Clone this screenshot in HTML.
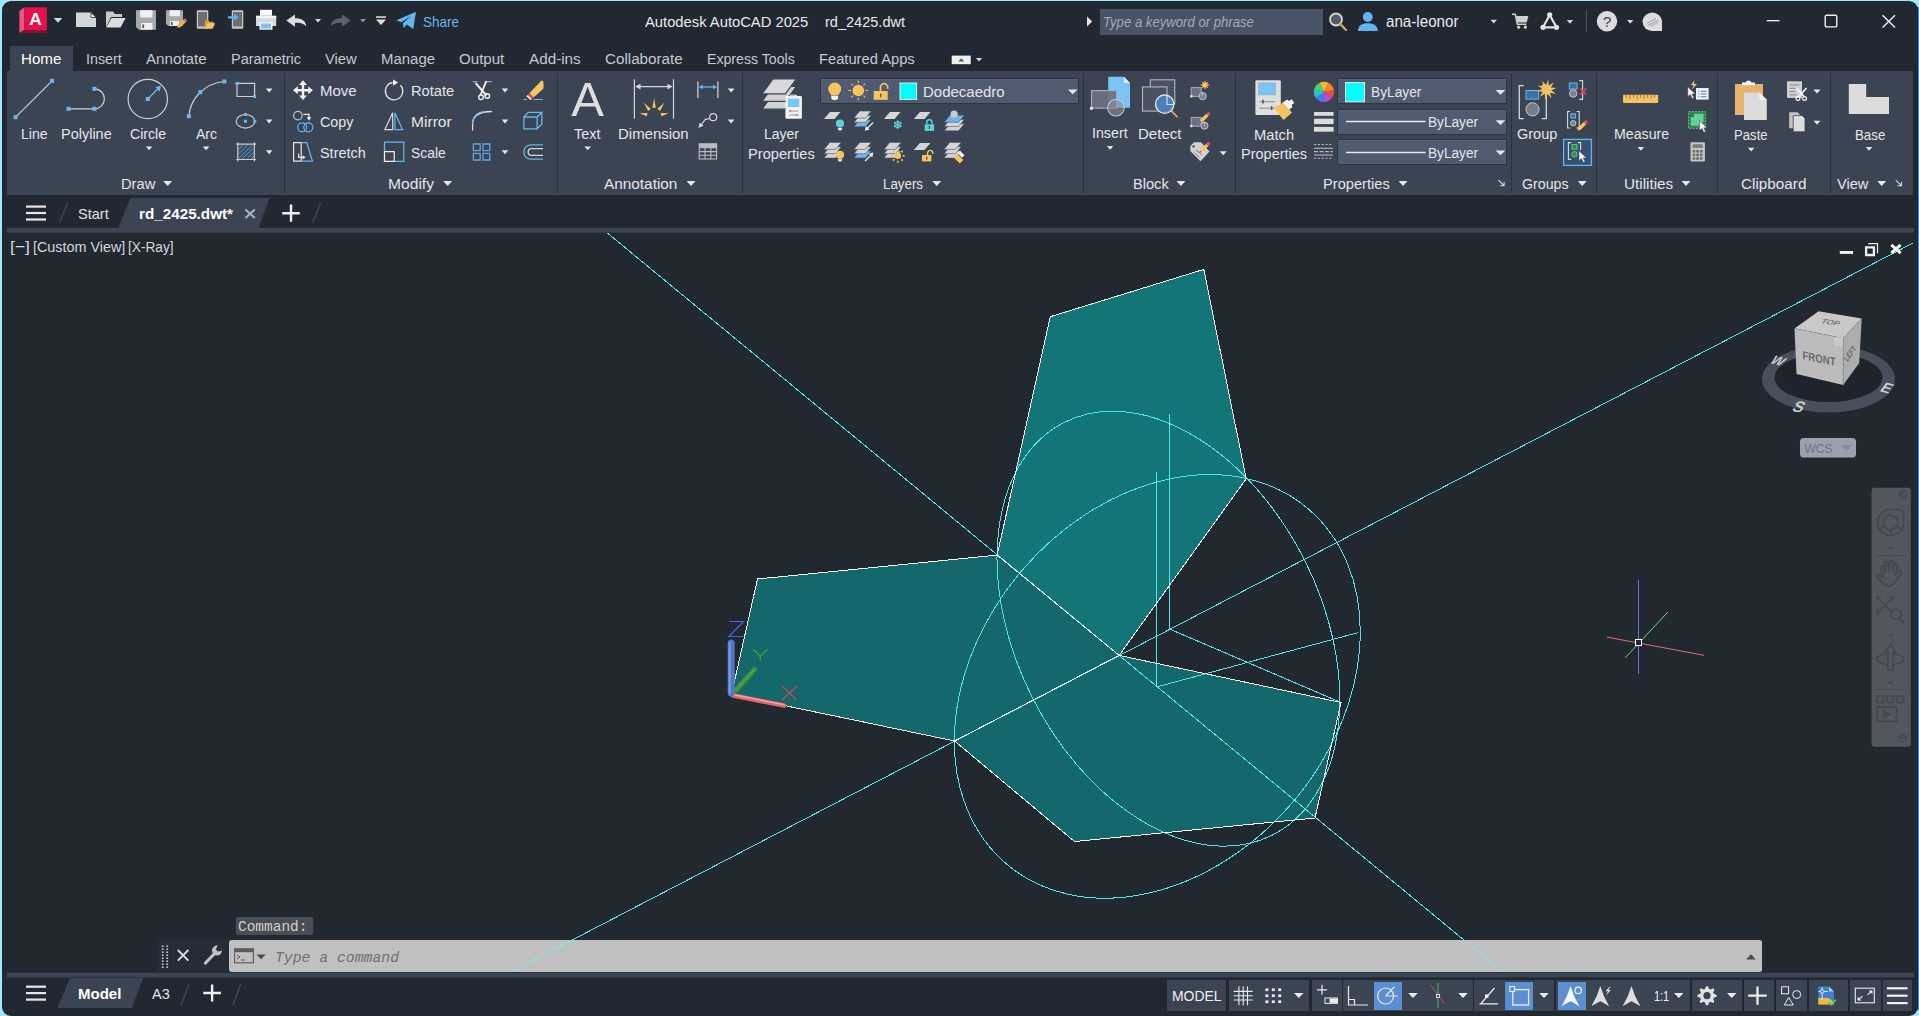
<!DOCTYPE html><html><head><meta charset="utf-8"><title>Autodesk AutoCAD 2025 - rd_2425.dwt</title><style>
*{margin:0;padding:0;box-sizing:border-box}
html,body{width:1919px;height:1016px;overflow:hidden;background:#9ae8fb}
body{font-family:"Liberation Sans",sans-serif;position:relative}
#win{position:absolute;left:0;top:0;width:1919px;height:1016px;overflow:hidden;background:#9eeafc}
#app{position:absolute;left:2px;top:2px;width:1916px;height:1014px;background:#222831;border-radius:9px 9px 9px 9px;overflow:hidden}
.abs{position:absolute}
.t{position:absolute;white-space:nowrap;line-height:20px;height:20px;transform-origin:0 50%;display:block}
.mono{font-family:"Liberation Mono",monospace}
svg{position:absolute;overflow:visible}
#app{left:1.8px;top:1.4px;width:1916.2px;height:1014.6px}
#rb{position:absolute;left:1916px;top:7px;width:3px;height:1003px;background:#2a8fd6}
.pn{position:absolute;background:#3b4453}
.sep{position:absolute;width:1px;background:#2b323e;top:73px;height:120px}
.dd{position:absolute;background:#4f5b6f;border:1px solid #2d3542;box-shadow:inset 0 1px 0 #56637a}
.arr{position:absolute;width:0;height:0;border-left:4.5px solid transparent;border-right:4.5px solid transparent;border-top:5px solid #e4e6ea}
.arrs{position:absolute;width:0;height:0;border-left:3.5px solid transparent;border-right:3.5px solid transparent;border-top:4px solid #e4e6ea}
.sb{position:absolute;top:980px;height:31px;background:#3b4453}
.sbh{position:absolute;top:982px;height:28px;background:#5b8fd2}
</style></head><body><div id="win">
<div id="rb"></div>
<div id="app"></div>
<!-- coordinates below are in page space -->
<!-- ribbon active tab -->
<div class="pn" style="left:10px;top:46px;width:63.2px;height:27px"></div>
<!-- ribbon panel -->
<div class="pn" style="left:7px;top:71px;width:1906px;height:124px"></div>
<div class="sep" style="left:284px"></div>
<div class="sep" style="left:557px"></div>
<div class="sep" style="left:742px"></div>
<div class="sep" style="left:1083px"></div>
<div class="sep" style="left:1235px"></div>
<div class="sep" style="left:1511px"></div>
<div class="sep" style="left:1596px"></div>
<div class="sep" style="left:1717px"></div>
<div class="sep" style="left:1830px"></div>
<!-- search box -->
<div class="abs" style="left:1100px;top:9px;width:223px;height:26px;background:#495367"></div>
<!-- layer dropdown -->
<div class="dd" style="left:820.3px;top:77.6px;width:259.2px;height:26.8px"></div>
<div class="dd" style="left:1337.2px;top:78.4px;width:170.2px;height:26px"></div>
<div class="dd" style="left:1337.2px;top:108.7px;width:170.2px;height:26.7px"></div>
<div class="dd" style="left:1337.2px;top:138.9px;width:170.2px;height:26.4px"></div>
<!-- file tab strip -->
<svg style="left:0;top:0" width="1919" height="1016" viewBox="0 0 1919 1016">
 <path d="M118.3,228L129.6,200A3,3 0 0 1 132.4,198H269.7L258.5,228Z" fill="#3b4453"/>
 <rect x="7" y="227.8" width="1907" height="5" fill="#3c4554"/>
 <rect x="2" y="232.8" width="1916" height="740" fill="#212830"/>
 <rect x="7" y="972.6" width="1907" height="4.8" fill="#3c4554"/>
 <polygon points="57.3,1008 70,978 143.3,978 131.7,1008" fill="#3b4453"/>
</svg>
<!-- status bar boxes -->
<div class="sb" style="left:1167px;width:59px"></div>
<div class="sb" style="left:1229px;width:80px"></div>
<div class="sb" style="left:1312px;width:30px"></div>
<div class="sb" style="left:1343px;width:130px"></div>
<div class="sb" style="left:1474px;width:80px"></div>
<div class="sb" style="left:1556px;width:134px"></div>
<div class="sb" style="left:1692px;width:50px"></div>
<div class="sb" style="left:1744px;width:30px"></div>
<div class="sb" style="left:1776px;width:31px"></div>
<div class="sb" style="left:1809px;width:39px"></div>
<div class="sb" style="left:1850px;width:31px"></div>
<div class="sb" style="left:1883px;width:29px"></div>
<div class="sbh" style="left:1374px;width:28px"></div>
<div class="sbh" style="left:1505px;width:28px"></div>
<div class="sbh" style="left:1558px;width:28px"></div>

<svg id="dwg" style="left:0;top:0" width="1919" height="1016" viewBox="0 0 1919 1016">
<defs><clipPath id="dc"><rect x="3" y="233" width="1911" height="739"/></clipPath></defs>
<g clip-path="url(#dc)" shape-rendering="crispEdges" fill="none" stroke-width="1">
<polygon points="757.5,579 997.2,555.1 1119.1,655.4 954.6,741 731.5,694.5" fill="#14686c" stroke="none"/>
<polygon points="1119.1,655.4 1341,702.5 1315,818 1074.5,841.5 954.6,741" fill="#14676b" stroke="none"/>
<polygon points="1050.3,316.7 1203.8,269.4 1246.2,478.8 1119.1,655.4 997.2,555.1" fill="#147578" stroke="none"/>
<g stroke="#4fe6ea">
<ellipse cx="1168.4" cy="628.7" rx="231.1" ry="152.5" transform="rotate(-116.78 1168.4 628.7)"/>
<ellipse cx="1157.3" cy="686.4" rx="233.0" ry="178.2" transform="rotate(-49.7 1157.3 686.4)"/>
<line x1="607.4" y1="233" x2="1502.7" y2="972"/>
<line x1="510.6" y1="972" x2="1913.4" y2="242.8"/>
<line x1="1156.5" y1="472" x2="1156.5" y2="687"/>
<line x1="1169.5" y1="414" x2="1169.5" y2="629"/>
<line x1="1169.5" y1="629" x2="1341" y2="702.5"/>
<line x1="1156.5" y1="687" x2="1358.5" y2="632.5"/>
</g>
<g stroke="#f4fbfb">
<polygon points="757.5,579 997.2,555.1 1119.1,655.4 954.6,741 731.5,694.5"/>
<polygon points="1119.1,655.4 1341,702.5 1315,818 1074.5,841.5 954.6,741"/>
<polygon points="1050.3,316.7 1203.8,269.4 1246.2,478.8 1119.1,655.4 997.2,555.1"/>
</g>
</g>
</svg>
<svg style="left:0;top:0" width="1919" height="1016" viewBox="0 0 1919 1016">
<!-- overlay -->
<g stroke-linecap="round">
<line x1="735.5" y1="690.5" x2="754.5" y2="669.5" stroke="#3f8f3a" stroke-width="5.2"/>
<line x1="736.3" y1="689.6" x2="754.3" y2="669.7" stroke="#5aa84a" stroke-width="2" opacity=".7"/>
<line x1="733" y1="695.5" x2="784" y2="705.6" stroke="#e06468" stroke-width="4.6"/>
<line x1="733" y1="694.6" x2="784" y2="704.7" stroke="#f4a0a0" stroke-width="1.6"/>
<line x1="731.2" y1="693" x2="731.2" y2="643" stroke="#4f78c4" stroke-width="7"/>
<line x1="729.6" y1="693" x2="729.6" y2="643" stroke="#7a9ee0" stroke-width="2"/>
</g>
<path d="M729,621.5H743.5L729,636.5H743.5" fill="none" stroke="#3a6ce0" stroke-width="1.2"/>
<path d="M753,649L760.3,656.5L767.5,649M760.3,656.5V661" fill="none" stroke="#3fa63a" stroke-width="1.2"/>
<path d="M782,686L797,700M797,686L782,700" fill="none" stroke="#c84a50" stroke-width="1.2"/>
<g shape-rendering="crispEdges"><line x1="1638.5" y1="580" x2="1638.5" y2="674" stroke="#6a72e0" stroke-width="1"/></g>
<line x1="1606.9" y1="637.1" x2="1704" y2="655.3" stroke="#d67478" stroke-width="1"/>
<line x1="1625.2" y1="657.8" x2="1667.9" y2="612" stroke="#6fd67a" stroke-width="1"/>
<rect x="1635.5" y="639.5" width="6" height="6" fill="#222933" stroke="#ffffff" stroke-width="1" shape-rendering="crispEdges"/>
<ellipse cx="1828.5" cy="379" rx="66.5" ry="33.5" fill="#484f5c"/>
<ellipse cx="1828.5" cy="377.5" rx="54" ry="24.5" fill="#1e232c"/>
<polygon points="1794.5,328.4 1818.6,311.2 1861.7,318.6 1843.2,338.3" fill="#c9c9c9"/>
<polygon points="1794.5,328.4 1843.2,338.3 1843.2,385 1796.5,374" fill="#bcbcbc"/>
<polygon points="1843.2,338.3 1861.7,318.6 1859.2,362.9 1843.2,385" fill="#adadad"/>
<path d="M1794.5,328.4L1843.2,338.3L1861.7,318.6M1843.2,338.3V385" fill="none" stroke="#8a8a8a" stroke-width=".8" stroke-dasharray="3 2"/>
<rect x="1834" y="337" width="9" height="9" fill="#d4d4d4" opacity=".6"/>
<text transform="translate(1802.5,359) skewY(12)" font-family="Liberation Sans, sans-serif" font-weight="700" font-size="11.5" fill="#6a6a6a" textLength="33" lengthAdjust="spacingAndGlyphs">FRONT</text>
<text transform="translate(1820,323) rotate(9) skewX(-30)" font-family="Liberation Sans, sans-serif" font-weight="700" font-size="7" fill="#7a7a7a" textLength="18" lengthAdjust="spacingAndGlyphs">TOP</text>
<text transform="translate(1847.5,362) rotate(-55) skewX(-10)" font-family="Liberation Sans, sans-serif" font-weight="700" font-size="8" fill="#6a6a6a" textLength="16" lengthAdjust="spacingAndGlyphs">LEFT</text>
<text transform="translate(1769,363) rotate(14) skewX(-28)" font-family="Liberation Sans, sans-serif" font-weight="700" font-size="13" fill="#c4c4c4">W</text>
<text transform="translate(1791,411) rotate(9) skewX(-20)" font-family="Liberation Sans, sans-serif" font-weight="700" font-size="16" fill="#cccccc">S</text>
<text transform="translate(1879,391) rotate(16) skewX(-20)" font-family="Liberation Sans, sans-serif" font-weight="700" font-size="15" fill="#cccccc">E</text>
<rect x="1800" y="438" width="56" height="19.5" rx="3.5" fill="#9b9fae"/>
<text x="1804.5" y="452.5" font-family="Liberation Sans, sans-serif" font-size="12.5" fill="#6f7382" textLength="28" lengthAdjust="spacingAndGlyphs">WCS</text>
<polygon points="1841,445 1852,445 1846.5,450.5" fill="#858999"/>
<rect x="1871.5" y="487.7" width="39.3" height="259" rx="3" fill="#51565f"/>
<g fill="none" stroke="#44484f" stroke-width="1.6">
<path d="M1890.5,509.5H1900A3.5,3.5 0 0 1 1903.5,513V522.5A13,13 0 1 1 1890.5,509.5Z"/><circle cx="1890.5" cy="522.5" r="7.2"/><path d="M1890.5,529.7V535.5M1884.3,526L1879.5,529M1896.7,526L1901.5,529"/>
<path d="M1883.5,577L1880.5,568.5C1879.8,566.3 1882.6,565.3 1883.5,567.4L1885.5,572.5L1884.6,563.2C1884.4,561 1887.4,560.6 1887.8,562.8L1889,571L1889.6,561.5C1889.8,559.3 1892.8,559.4 1892.8,561.6L1892.6,571.5L1894.8,563.8C1895.4,561.7 1898.3,562.5 1897.8,564.7L1895.8,574L1898.5,571.5C1900,570 1902.3,571.8 1901,573.6L1895.5,581.5C1893.5,584.5 1891.5,586 1888.5,586C1885,586 1883,584 1880.5,581L1876.8,576.5C1875.5,574.8 1877.6,573.2 1879.2,574.6Z"/>
<path d="M1877,597L1893,613M1893,597L1877,613M1877,601V597H1881M1889,597H1893V601M1877,609V613H1881"/><circle cx="1896" cy="614.5" r="5"/><path d="M1899.5,618.5L1904,623" stroke-width="2.4"/>
<ellipse cx="1890.5" cy="659" rx="13.5" ry="5.5"/><path d="M1888,670V652H1885L1890.5,644.5L1896,652H1893V670Z" fill="#51565f"/>
<rect x="1877" y="696" width="6.5" height="6.5"/><rect x="1887" y="696" width="6.5" height="6.5"/><rect x="1897" y="696" width="6.5" height="6.5"/><rect x="1877" y="707" width="19.5" height="14.5"/>
</g>
<path d="M1882.5,713.5L1891.5,718L1882.5,722.5Z" fill="#44484f" transform="translate(0,-3.7)"/>
<polygon points="1887.5,547 1893.5,547 1890.5,550.5" fill="#44484f"/>
<polygon points="1887.5,634.5 1893.5,634.5 1890.5,638.0" fill="#44484f"/>
<polygon points="1887.5,681.5 1893.5,681.5 1890.5,685.0" fill="#44484f"/>
<path d="M1875,555.5H1907M1875,689.5H1907" stroke="#44484f" stroke-width=".8"/>
<circle cx="1903.5" cy="494.5" r="3.6" fill="none" stroke="#44484f" stroke-width="1.2"/><path d="M1901.2,492.2L1905.8,496.8M1905.8,492.2L1901.2,496.8" stroke="#44484f" stroke-width="1"/>
<circle cx="1903" cy="738.5" r="3.6" fill="none" stroke="#44484f" stroke-width="1.2"/><path d="M1899.6,737.5H1906.4" stroke="#44484f" stroke-width="1"/>
<rect x="236" y="917" width="77.2" height="18" rx="2" fill="#4a4d53"/>
<path d="M160,938.8H229V972.6H157V941.8A3,3 0 0 1 160,938.8Z" fill="#262c37"/>
<rect x="161.8" y="945.4" width="1.8" height="1.6" fill="#b8bcc4"/><rect x="166.3" y="945.4" width="1.8" height="1.6" fill="#b8bcc4"/>
<rect x="161.8" y="948.4" width="1.8" height="1.6" fill="#b8bcc4"/><rect x="166.3" y="948.4" width="1.8" height="1.6" fill="#b8bcc4"/>
<rect x="161.8" y="951.4" width="1.8" height="1.6" fill="#b8bcc4"/><rect x="166.3" y="951.4" width="1.8" height="1.6" fill="#b8bcc4"/>
<rect x="161.8" y="954.4" width="1.8" height="1.6" fill="#b8bcc4"/><rect x="166.3" y="954.4" width="1.8" height="1.6" fill="#b8bcc4"/>
<rect x="161.8" y="957.4" width="1.8" height="1.6" fill="#b8bcc4"/><rect x="166.3" y="957.4" width="1.8" height="1.6" fill="#b8bcc4"/>
<rect x="161.8" y="960.4" width="1.8" height="1.6" fill="#b8bcc4"/><rect x="166.3" y="960.4" width="1.8" height="1.6" fill="#b8bcc4"/>
<rect x="161.8" y="963.4" width="1.8" height="1.6" fill="#b8bcc4"/><rect x="166.3" y="963.4" width="1.8" height="1.6" fill="#b8bcc4"/>
<rect x="161.8" y="966.4" width="1.8" height="1.6" fill="#b8bcc4"/><rect x="166.3" y="966.4" width="1.8" height="1.6" fill="#b8bcc4"/>
<path d="M177.8,950L188.4,960.6M188.4,950L177.8,960.6" stroke="#d8d8d8" stroke-width="2"/>
<path d="M205.5,963L215.5,952.5" stroke="#c2c2c2" stroke-width="3.2" stroke-linecap="round"/><path d="M221.8,949.3A5,5 0 1 1 217.8,945.6L215.8,949.2L217.8,951.5L221.2,951Z" fill="#c2c2c2"/>
<path d="M232,940H1759.5A2.5,2.5 0 0 1 1762,942.5V969.5A2.5,2.5 0 0 1 1759.5,972H232A3,3 0 0 1 229,969V943A3,3 0 0 1 232,940Z" fill="#c6c6c6" fill-opacity=".965"/>
<g shape-rendering="crispEdges" stroke="#86e4e6" stroke-width="1"><line x1="572" y1="940" x2="510.6" y2="972"/><line x1="1463.9" y1="940" x2="1502.7" y2="972"/></g>
<rect x="234.6" y="948.8" width="18.8" height="14" fill="none" stroke="#5a5a5a" stroke-width="1.1"/><rect x="234.6" y="948.8" width="18.8" height="3.4" fill="#5a5a5a"/><path d="M237,955L240,957L237,959M241,960H245" fill="none" stroke="#5a5a5a" stroke-width="1"/>
<polygon points="256.5,954.4 265.7,954.4 261.1,959.2" fill="#4a4a4a"/>
<polygon points="1746.2,959.5 1755.8,959.5 1751,954.3" fill="#4a4a4a"/>
</svg>

<svg style="left:0;top:0" width="1919" height="1016" viewBox="0 0 1919 1016">
<!-- ===== title bar ===== -->
<g id="qa">
 <!-- A logo -->
 <polygon points="19.4,11 24.4,7.3 24.4,30.1 19.4,33" fill="#e8577c"/>
 <polygon points="19.4,33 24.4,30.1 46.9,30.1 46.9,33" fill="#8a0e2e"/>
 <rect x="24.4" y="7.3" width="22.5" height="22.8" fill="#e6114c"/>
 <text x="35.6" y="25.2" font-family="Liberation Sans, sans-serif" font-weight="700" font-size="17.3" fill="#fff" text-anchor="middle">A</text>
 <polygon points="53.7,18 62.3,18 58,22.7" fill="#d4d6da"/>
 <!-- new -->
 <path d="M76,12.6H91L96,17.5V27H76Z" fill="#d6d6d6"/><path d="M91,12.6V17.5H96Z" fill="#fff" stroke="#222933" stroke-width=".8"/>
 <!-- open -->
 <path d="M106,27.5V11.5H113L115,14H122V17H111Z" fill="#c9c9c9"/><path d="M106.3,27.6L111.5,18H125.6L120.5,27.6Z" fill="#dcdcdc"/>
 <!-- save -->
 <path d="M136,10.2H156V29.7H139L136,27Z" fill="#a9a9a9"/><rect x="140" y="10.2" width="12.5" height="7.3" fill="#f0f0f0"/><rect x="141" y="23" width="11.5" height="6.7" fill="#f0f0f0"/><rect x="142.3" y="24.5" width="1.8" height="3.6" fill="#555"/>
 <!-- save as -->
 <path d="M166,10.2H183V26H168.5L166,24Z" fill="#a9a9a9"/><rect x="169.5" y="10.2" width="10.5" height="6" fill="#f0f0f0"/><rect x="170" y="21" width="9" height="5" fill="#f0f0f0"/><rect x="171" y="22" width="1.6" height="3" fill="#555"/>
 <path d="M176.5,28.5L177.8,24.5L183.5,19.5L186,22L180.3,27.3Z" fill="#e8b04c"/><path d="M183.5,19.5L185,18.2L187.2,20.6L186,22Z" fill="#e8606c"/><path d="M176.5,28.5L177.2,26.4L178.6,27.8Z" fill="#333"/>
 <!-- mobile open -->
 <rect x="196.8" y="10.2" width="11.5" height="18.5" rx="1.2" fill="#c8c8c8"/><rect x="198" y="12" width="9" height="14.5" fill="#6e6e6e"/>
 <path d="M204.8,28.7V20.5H208.5L209.5,21.8H213.5V23.5Z" fill="#d8a038"/><path d="M204.8,28.8L207.5,23.3H215.2L212.6,28.8Z" fill="#f2c75c"/>
 <!-- mobile save -->
 <rect x="231.8" y="10.2" width="11.5" height="18.5" rx="1.2" fill="#c8c8c8"/><rect x="233" y="12" width="9" height="14.5" fill="#6e6e6e"/>
 <path d="M228,16.3H234V14L239,17.3L234,20.6V18.4H228Z" fill="#5ab4f4"/>
 <!-- print -->
 <rect x="260" y="9.8" width="12" height="6" fill="#fafafa"/><path d="M256,15.8H276.2V26H256Z" fill="#d9d9d9"/><rect x="256" y="15.8" width="20.2" height="2.4" fill="#f4f4f4"/><rect x="259.5" y="22" width="13" height="7.7" fill="#f4f4f4"/><rect x="261" y="23.5" width="10" height="5" fill="#7cc4f4"/>
 <!-- undo -->
 <path d="M286.3,20.5L295,14.5V18.3C301.5,18.3 305.8,20.8 306.3,26.5C303.6,23.4 300.4,22.8 295,22.8V26.7Z" fill="#dedede"/>
 <polygon points="315,19 321,19 318,22.6" fill="#d4d6da"/>
 <!-- redo -->
 <path d="M350.6,20.5L341.9,14.5V18.3C335.4,18.3 331.1,20.8 330.6,26.5C333.3,23.4 336.5,22.8 341.9,22.8V26.7Z" fill="#5b636f"/>
 <polygon points="360,19 366,19 363,22.6" fill="#8b909a"/>
 <!-- customize -->
 <rect x="376" y="16.3" width="10" height="1.5" fill="#e0e0e0"/><polygon points="376,19.6 386,19.6 381,25" fill="#e0e0e0"/>
 <!-- share -->
 <path d="M396.3,20.2L416,11.8L413.3,28.9L406.8,24.6L403.5,28.2L403,23L411,16L401.3,22.3Z" fill="#62b5f0"/>
</g>
<g id="tb-right" fill="none">
 <polygon points="1087,16.5 1087,26.5 1092.2,21.5" fill="#e4e6ea"/>
 <!-- magnifier -->
 <circle cx="1336" cy="19.5" r="6" fill="#555b66" stroke="#d8d8d8" stroke-width="1.8"/><path d="M1340.5,24.3L1346,30" stroke="#c8a070" stroke-width="2.4" stroke-linecap="round"/>
 <!-- user -->
 <circle cx="1367.8" cy="17" r="4.9" fill="#62b5f0"/><path d="M1358,31C1358,25.5 1362,23.3 1367.8,23.3S1377.7,25.5 1377.7,31Z" fill="#62b5f0"/>
 <polygon points="1490.5,19.8 1497,19.8 1493.7,23.6" fill="#d4d6da"/>
 <!-- cart -->
 <path d="M1512,14.2H1515.3L1517.3,24.3H1526.3" stroke="#cfcfcf" stroke-width="1.6"/><path d="M1516,16H1528.3L1526.8,22.6H1517.2Z" fill="#cfcfcf"/><circle cx="1518.6" cy="27.2" r="1.6" fill="#cfcfcf"/><circle cx="1525.4" cy="27.2" r="1.6" fill="#cfcfcf"/>
 <!-- autodesk A triangle -->
 <path d="M1549.7,15L1543,27.3H1556.5Z" stroke="#e4e4e4" stroke-width="2.2" stroke-linejoin="round"/><circle cx="1549.7" cy="14.8" r="2.6" fill="#e4e4e4"/><circle cx="1543" cy="27.3" r="2.6" fill="#e4e4e4"/><circle cx="1556.5" cy="27.3" r="2.6" fill="#e4e4e4"/>
 <polygon points="1566.8,20 1573.2,20 1570,23.7" fill="#d4d6da"/>
 <rect x="1586" y="9.5" width="1" height="22.5" fill="#4a5260"/>
 <!-- help -->
 <circle cx="1607" cy="21.3" r="10.2" fill="#dcdcdc"/>
 <text x="1607" y="26.8" font-family="Liberation Sans, sans-serif" font-size="15.5" fill="#3a3f4a" text-anchor="middle">?</text>
 <polygon points="1627,20 1633.4,20 1630.2,23.7" fill="#d4d6da"/>
 <!-- assistant bubble -->
 <path d="M1642.5,21.3A9.8,9.8 0 0 1 1662,21.3V31H1652.2A9.8,9.8 0 0 1 1642.5,21.3Z" fill="#dcdcdc"/>
 <path d="M1647,23.5L1656,18.5M1648,25.5L1658,20M1651,26.2L1658.5,22" stroke="#9a9a9a" stroke-width=".9"/>
 <!-- window controls -->
 <rect x="1766.7" y="20" width="12.8" height="1.3" fill="#f0f0f0"/>
 <rect x="1825.2" y="15.3" width="11.6" height="11.6" rx="1.5" stroke="#f0f0f0" stroke-width="1.4"/>
 <path d="M1882.6,15.2L1895,27.6M1895,15.2L1882.6,27.6" stroke="#f0f0f0" stroke-width="1.4"/>
 <!-- ribbon tab extra -->
 <rect x="951.7" y="55.6" width="19" height="8.6" fill="#f0f0f0"/><polygon points="958.3,61.5 964.3,61.5 961.3,58.3" fill="#555"/>
 <polygon points="975.8,58 982.2,58 979,61.6" fill="#d4d6da"/>
</g>

<!-- ===== Draw panel ===== -->
<g fill="none" stroke="#cdcfd3" stroke-width="1.2">
 <line x1="15.6" y1="117.2" x2="52.1" y2="80.8"/>
 <path d="M68.5,108.8H94.4A10,10 0 0 0 94.4,88.8"/>
 <circle cx="147.8" cy="99" r="19.7"/>
 <path d="M188.9,116.2C190,100 203,83.5 224.4,81.5"/>
 <path d="M237,83.4H254.6V96.5H237Z"/>
 <ellipse cx="245.5" cy="121.3" rx="9.3" ry="6.8"/>
 <path d="M236.3,144.2H256M236.3,159.5H256M237.8,142.3V161.5M254.3,142.3V161.5"/>
</g>
<g fill="#6ab7f0">
 <rect x="13.6" y="115.2" width="4" height="4"/><rect x="50.1" y="78.8" width="4" height="4"/>
 <rect x="66.5" y="106.8" width="4" height="4"/><rect x="92.4" y="106.8" width="4" height="4"/><rect x="92.4" y="86.8" width="4" height="4"/>
 <rect x="145.8" y="97" width="4" height="4"/>
 <path d="M147.3,98.5L157,88.8L155.3,87.1L161,85.7L159.6,91.4L157.9,89.7L148.2,99.4Z"/>
 <rect x="186.9" y="114.2" width="4" height="4"/><rect x="198.3" y="90.1" width="4" height="4"/><rect x="222.4" y="79.5" width="4" height="4"/>
 <rect x="235.5" y="81.9" width="3" height="3"/><rect x="253.1" y="95" width="3" height="3"/>
 <rect x="244" y="113" width="3" height="3"/><rect x="244" y="119.8" width="3" height="3"/><rect x="253.3" y="119.8" width="3" height="3"/>
</g>
<g stroke="#5aa0d8" stroke-width=".9">
 <path d="M238.4,149.5L243.5,144.8M238.4,154L248,144.8M238.4,158.6L252.8,144.8M242,159L253.7,148M246.6,159L253.7,152.4M251,159L253.7,156.6"/>
</g>
<rect x="238.4" y="144.8" width="15.3" height="14.1" fill="#6ab7f0" opacity=".06"/>
<!-- ===== Modify panel ===== -->
<g fill="#f2f2f2">
 <path d="M303,80.3L307,85H304.2V89H308.2V86.2L312.9,90.2L308.2,94.2V91.4H304.2V95.4H307L303,100L299,95.4H301.8V91.4H297.8V94.2L293,90.2L297.8,86.2V89H301.8V85H299Z"/>
</g>
<g fill="none" stroke-width="1.2">
 <circle cx="297.9" cy="115.6" r="4.3" stroke="#bfc3c9"/>
 <path d="M303.5,114.3H309V118" stroke="#f0f0f0"/><path d="M306.6,117.3H311.4L309,120.4Z" fill="#f0f0f0" stroke="none"/>
 <circle cx="302.2" cy="127.3" r="4.5" stroke="#6ab7f0"/><circle cx="308.3" cy="127.3" r="4.5" stroke="#6ab7f0"/>
 <path d="M293.6,142.6H301.2V161.2H293.6Z" stroke="#e6e6e6"/>
 <path d="M301.2,142.6H306.8L312.4,161.2H301.2" stroke="#6ab7f0"/>
 <path d="M298.6,153.5V157.3H303.5" stroke="#e6e6e6"/><path d="M302.6,155.2L305.6,157.3L302.6,159.4Z" fill="#e6e6e6" stroke="none"/>
 <!-- rotate -->
 <path d="M392.5,82.5A8.7,8.7 0 1 0 400.5,85.2" stroke="#e0e0e0" stroke-width="1.3"/><path d="M393,79.5L398.2,82.6L393,85.7Z" fill="#f0f0f0" stroke="none"/>
 <!-- mirror -->
 <path d="M392.7,112.8V129.6H384.9Z" stroke="#dcdcdc"/><path d="M394.9,112.8V129.6H402.5Z" stroke="#6ab7f0"/>
 <!-- scale -->
 <path d="M384.5,142.1H403.8V161.3H384.5Z" stroke="#6ab7f0"/><path d="M384.5,151.6H394.2V161.3H384.5Z" stroke="#f0f0f0" fill="#3b4453"/>
 <!-- trim scissors -->
 <path d="M472.5,81.6H477.5M485,81.6H492" stroke="#8fa0b8"/>
 <path d="M475.5,83L486.5,95.5M486.3,81L480.3,95.5" stroke="#f2f2f2" stroke-width="1.9"/>
 <circle cx="481" cy="97.3" r="2.3" stroke="#f2f2f2" stroke-width="1.4"/><circle cx="487.3" cy="96" r="2.3" stroke="#f2f2f2" stroke-width="1.4"/>
 <!-- fillet -->
 <path d="M472.6,130.4V124C472.6,116 478,111.5 491.9,111.5" stroke="#e0e0e0" stroke-width="1.3"/>
 <path d="M472.6,124C472.6,116 478,112 485,111.6" stroke="#6ab7f0" stroke-width="1.3"/>
 <!-- array -->
 <path d="M473.4,144H480.2V150.6H473.4ZM483,144H489.8V150.6H483ZM473.4,153.4H480.2V160H473.4ZM483,153.4H489.8V160H483Z" stroke="#5fa5e0" stroke-width="1.3"/>
 <!-- erase -->
 <path d="M529.3,93.2L541.8,80.2L543.5,81.8V88.6L533.6,97.4Z" fill="#f2c465" stroke="none"/><path d="M527.6,95L529.3,93.2L533.6,97.4L531.8,99Z" fill="#e64a5c" stroke="none"/><path d="M526.4,96.3L527.6,95L531.8,99L530.5,100Z" fill="#f4f4f4" stroke="none"/>
 <path d="M523.5,99.5H527M533.5,99.5H543" stroke="#6ab7f0"/>
 <!-- box -->
 <path d="M523.9,117H537.2V128.8H523.9ZM523.9,117L528.4,112.4H541.8L537.2,117M541.8,112.4V124.2L537.2,128.8" stroke="#6ab7f0" stroke-width="1.3"/>
 <!-- offset -->
 <path d="M543,144.8H531A7.2,7.2 0 0 0 531,159.2H543" stroke="#6ab7f0" stroke-width="1.3"/><path d="M543,148.7H531.5A3.3,3.3 0 0 0 531.5,155.3H543" stroke="#d8d8d8" stroke-width="1.3"/>
</g>

<!-- annotation+layers -->
<text x="587.5" y="116" font-family="Liberation Sans, sans-serif" font-size="49" fill="#dedede" text-anchor="middle">A</text>
<g fill="none" stroke="#d6d6d6" stroke-width="1.2"><path d="M634.4,79.3V118.7M673.5,79.3V118.7M637,86.6H671"/></g>
<path d="M635.2,86.6L640.5,83.8V89.4ZM672.7,86.6L667.4,83.8V89.4Z" fill="#d6d6d6"/>
<path d="M654.1,98.3L655.8,107.8L652.4,107.8Z" fill="#f5c461"/>
<path d="M664.3,102.8L660.1,110.9L657.4,108.8Z" fill="#f5c461"/>
<path d="M643.9,102.8L650.8,108.8L648.1,110.9Z" fill="#f5c461"/>
<path d="M668.7,113.2L661.3,116.3L660.7,112.9Z" fill="#f5c461"/>
<path d="M639.5,113.2L647.5,112.9L646.9,116.3Z" fill="#f5c461"/>
<g fill="none" stroke-width="1.2"><path d="M697.9,81.5V98M717.9,81.5V98" stroke="#d6d6d6"/><path d="M700.5,87H715.3" stroke="#6ab7f0" stroke-width="1.3"/></g>
<path d="M698.8,87L702.8,84.7V89.3ZM717,87L713,84.7V89.3Z" fill="#6ab7f0"/>
<g fill="none" stroke="#d6d6d6" stroke-width="1.2"><circle cx="713.2" cy="117.2" r="3.5"/><path d="M709.9,118.5L705.3,119.3L700.5,125.6"/></g><path d="M698.3,128L699.6,122.8L703.5,125.8Z" fill="#d6d6d6"/>
<g fill="none" stroke="#b9bcc2" stroke-width="1.1"><rect x="699.2" y="143.8" width="17.4" height="15.2"/><path d="M699.2,147.8H716.6M699.2,151.6H716.6M699.2,155.3H716.6M705,147.8V159M710.8,147.8V159"/></g><rect x="699.2" y="143.8" width="17.4" height="4" fill="#b9bcc2"/>
<path d="M773.0,94.2H796.4L785.4,109.2H762.0Z" fill="#d2d2d2" stroke="#3b4453" stroke-width="1.2"/>
<path d="M773.0,86.4H796.4L785.4,101.4H762.0Z" fill="#d2d2d2" stroke="#3b4453" stroke-width="1.2"/>
<path d="M773.0,78.9H796.4L785.4,93.9H762.0Z" fill="#d8d8d8" stroke="#3b4453" stroke-width="1.2"/>
<rect x="785.4" y="96" width="16.5" height="22.7" rx="1" fill="#f2f2f2"/><rect x="790" y="94.7" width="7" height="1.5" fill="#c8c8c8"/><rect x="787.9" y="98.6" width="11.4" height="8.4" fill="#7cc4f4"/>
<path d="M789,111H798.5M789,115H798.5" stroke="#888" stroke-width=".9"/><path d="M789,111L791,109.8V112.2ZM798.5,115L796.5,113.8V116.2Z" fill="#888"/>
<circle cx="834.7" cy="89" r="6.5" fill="#f5c461"/><path d="M831,94H838.4V95.5H831Z" fill="#f5c461"/><path d="M831.3,96H838.1V98.2C838.1,99.3 836.6,100 834.7,100S831.3,99.3 831.3,98.2Z" fill="#f4f4f4"/>
<circle cx="858.3" cy="90.5" r="5.8" fill="#f5c461"/>
<line x1="865.5" y1="90.5" x2="868.1" y2="90.5" stroke="#f5c461" stroke-width="1.1"/>
<line x1="863.4" y1="95.6" x2="865.2" y2="97.4" stroke="#f5c461" stroke-width="1.1"/>
<line x1="858.3" y1="97.7" x2="858.3" y2="100.3" stroke="#f5c461" stroke-width="1.1"/>
<line x1="853.2" y1="95.6" x2="851.4" y2="97.4" stroke="#f5c461" stroke-width="1.1"/>
<line x1="851.1" y1="90.5" x2="848.5" y2="90.5" stroke="#f5c461" stroke-width="1.1"/>
<line x1="853.2" y1="85.4" x2="851.4" y2="83.6" stroke="#f5c461" stroke-width="1.1"/>
<line x1="858.3" y1="83.3" x2="858.3" y2="80.7" stroke="#f5c461" stroke-width="1.1"/>
<line x1="863.4" y1="85.4" x2="865.2" y2="83.6" stroke="#f5c461" stroke-width="1.1"/>
<rect x="873.7" y="91" width="14" height="8.8" fill="#f5c461"/><path d="M880.5,91V87.3A3.6,3.6 0 0 1 887.7,87.3V88.8" fill="none" stroke="#f5c461" stroke-width="1.7"/><rect x="880" y="93.8" width="1.4" height="3.4" fill="#5a4a20"/>
<rect x="900" y="83" width="16.6" height="16.4" fill="#00ffff" stroke="#e8e8e8" stroke-width="1"/>
<polygon points="1067.8,89.4 1077.6,89.4 1072.7,94.2" fill="#e4e6ea"/>
<path d="M829.9,111.9H840.5L834.5,118.9H823.9Z" fill="#d6d6d6"/>
<circle cx="840" cy="123.6" r="4.1" fill="#5fd0d4"/><path d="M837.8,128H842.2V129.2L840,131L837.8,129.2Z" fill="#f0f0f0"/>
<path d="M859.7,119.7H871.2L865.5,126.7H854.0Z" fill="#6ab7f0" stroke="#4a5261" stroke-width=".6"/><path d="M859.7,115.4H871.2L865.5,122.4H854.0Z" fill="#d6d6d6" stroke="#4a5261" stroke-width=".6"/><path d="M859.7,111.1H871.2L865.5,118.1H854.0Z" fill="#d6d6d6" stroke="#4a5261" stroke-width=".6"/>
<path d="M873.2,122.5L867,128.6" stroke="#f0f0f0" stroke-width="1.3"/><path d="M864.8,130.8L866,126L869.6,129.6Z" fill="#f0f0f0"/>
<path d="M889.9,111.9H900.5L894.5,118.9H883.9Z" fill="#d6d6d6"/>
<g stroke="#5fd0d4" stroke-width="1.1" fill="none"><path d="M897.8,120.2V129M894,122.4L901.6,126.8M894,126.8L901.6,122.4"/><path d="M896.3,121.2L897.8,122.4L899.3,121.2M896.3,128L897.8,126.8L899.3,128M894.2,124.2L895.8,123.4L895.4,121.8M901.4,124.2L899.8,123.4L900.2,121.8M894.2,125L895.8,125.8L895.4,127.4M901.4,125L899.8,125.8L900.2,127.4"/></g>
<path d="M919.9,111.9H930.5L924.5,118.9H913.9Z" fill="#d6d6d6"/>
<rect x="924.7" y="124.3" width="9.4" height="6.6" fill="#5fd0d4"/><path d="M926.8,124.3V122.4A2.6,2.6 0 0 1 932,122.4V124.3" fill="none" stroke="#5fd0d4" stroke-width="1.4"/><rect x="928.8" y="126" width="1.2" height="3" fill="#1d5a5c"/>
<path d="M950.0,123.8H964.3L958.6,130.8H944.3Z" fill="#d6d6d6" stroke="#4a5261" stroke-width=".6"/><path d="M950.0,119.5H964.3L958.6,126.5H944.3Z" fill="#d6d6d6" stroke="#4a5261" stroke-width=".6"/><path d="M950.0,115.2H964.3L958.6,122.2H944.3Z" fill="#6ab7f0" stroke="#4a5261" stroke-width=".6"/>
<circle cx="954.1" cy="114.2" r="3.6" fill="#cacaca"/>
<path d="M829.7,151.0H841.2L835.5,158.0H824.0Z" fill="#d6d6d6" stroke="#4a5261" stroke-width=".6"/><path d="M829.7,146.7H841.2L835.5,153.7H824.0Z" fill="#d6d6d6" stroke="#4a5261" stroke-width=".6"/><path d="M829.7,142.4H841.2L835.5,149.4H824.0Z" fill="#d6d6d6" stroke="#4a5261" stroke-width=".6"/>
<circle cx="840" cy="154.8" r="4.1" fill="#f5c461"/><path d="M837.8,159.2H842.2V160.2L840,162L837.8,160.2Z" fill="#f0f0f0"/>
<path d="M859.7,151.0H871.2L865.5,158.0H854.0Z" fill="#6ab7f0" stroke="#4a5261" stroke-width=".6"/><path d="M859.7,146.7H871.2L865.5,153.7H854.0Z" fill="#d6d6d6" stroke="#4a5261" stroke-width=".6"/><path d="M859.7,142.4H871.2L865.5,149.4H854.0Z" fill="#d6d6d6" stroke="#4a5261" stroke-width=".6"/>
<path d="M865,161L871,155" stroke="#f0f0f0" stroke-width="1.3"/><path d="M873.4,152.6L872.2,157.4L868.6,153.8Z" fill="#f0f0f0"/>
<path d="M889.7,151.0H901.2L895.5,158.0H884.0Z" fill="#d6d6d6" stroke="#4a5261" stroke-width=".6"/><path d="M889.7,146.7H901.2L895.5,153.7H884.0Z" fill="#d6d6d6" stroke="#4a5261" stroke-width=".6"/><path d="M889.7,142.4H901.2L895.5,149.4H884.0Z" fill="#d6d6d6" stroke="#4a5261" stroke-width=".6"/>
<circle cx="897.8" cy="155.8" r="3.3" fill="#f5c461"/>
<rect x="902.8" y="154.9" width="1.8" height="1.8" fill="#f5c461"/>
<rect x="901.1" y="159.1" width="1.8" height="1.8" fill="#f5c461"/>
<rect x="896.9" y="160.8" width="1.8" height="1.8" fill="#f5c461"/>
<rect x="892.7" y="159.1" width="1.8" height="1.8" fill="#f5c461"/>
<rect x="891.0" y="154.9" width="1.8" height="1.8" fill="#f5c461"/>
<rect x="892.7" y="150.7" width="1.8" height="1.8" fill="#f5c461"/>
<rect x="896.9" y="149.0" width="1.8" height="1.8" fill="#f5c461"/>
<rect x="901.1" y="150.7" width="1.8" height="1.8" fill="#f5c461"/>
<path d="M919.9,143.1H930.5L924.5,150.1H913.9Z" fill="#d6d6d6"/>
<rect x="922" y="155" width="9.4" height="6.4" fill="#f5c461"/><path d="M927.6,155V153A2.6,2.6 0 0 1 932.8,153V154" fill="none" stroke="#f5c461" stroke-width="1.4"/><rect x="926.1" y="156.7" width="1.2" height="3" fill="#5a4a20"/>
<path d="M949.7,151.0H961.2L955.5,158.0H944.0Z" fill="#d6d6d6" stroke="#4a5261" stroke-width=".6"/><path d="M949.7,146.7H961.2L955.5,153.7H944.0Z" fill="#d6d6d6" stroke="#4a5261" stroke-width=".6"/><path d="M949.7,142.4H961.2L955.5,149.4H944.0Z" fill="#d6d6d6" stroke="#4a5261" stroke-width=".6"/>
<path d="M953.5,157.2L957,153.8L963.3,160L959.8,163.4Z" fill="#f5c461"/><path d="M957.6,153.2L960,150.8L964.5,155.3L962,157.7Z" fill="#f4f4f4"/>
<!-- block/props/groups/util/clip -->
<path d="M1108.2,76.8H1124L1130,83V107.8H1108.2Z" fill="#7cc4f4"/><path d="M1124,76.8V83H1130Z" fill="#d4ecfc"/>
<rect x="1091.6" y="90.6" width="25" height="17.6" fill="#6b7180" stroke="#a9aeb8" stroke-width="1.1" fill-opacity=".92"/>
<circle cx="1115.9" cy="107.7" r="8.3" fill="#8a8f9a" fill-opacity=".6" stroke="#c3c7ce" stroke-width="1.1"/>
<rect x="1090" y="106.9" width="2.8" height="2.8" fill="#f0f0f0"/>
<rect x="1150.3" y="79.8" width="24.5" height="24" fill="#4a5261" stroke="#b3b7bf" stroke-width="1.1"/>
<rect x="1142.5" y="86.9" width="24.5" height="24.2" fill="#4a5261" stroke="#b3b7bf" stroke-width="1.1"/>
<path d="M1171.5,111L1177,116.6" stroke="#c9a36c" stroke-width="2" stroke-linecap="round"/>
<circle cx="1164.7" cy="104.1" r="9.2" fill="#4d80b8" stroke="#f0f0f0" stroke-width="1.3"/>
<path d="M1167,95.5V104.5H1173.5" fill="none" stroke="#d8e6f4" stroke-width="1.1"/>
<rect x="1191.2" y="87.6" width="10" height="8.8" fill="#6b7180" stroke="#a9aeb8" stroke-width="1"/><rect x="1190.2" y="95.19999999999999" width="2.2" height="2.2" fill="#f0f0f0"/>
<circle cx="1202.7" cy="96.1" r="3.6" fill="#7a7f8a" stroke="#c3c7ce" stroke-width="1"/><path d="M1202.7,93V96.1" stroke="#c3c7ce" stroke-width=".9"/>
<polygon points="1205.0,80.0 1205.9,82.9 1208.5,81.5 1207.1,84.1 1210.0,85.0 1207.1,85.9 1208.5,88.5 1205.9,87.1 1205.0,90.0 1204.1,87.1 1201.5,88.5 1202.9,85.9 1200.0,85.0 1202.9,84.1 1201.5,81.5 1204.1,82.9" fill="#f5c461"/>
<rect x="1191.2" y="117.4" width="10" height="8.8" fill="#6b7180" stroke="#a9aeb8" stroke-width="1"/><rect x="1190.2" y="125.0" width="2.2" height="2.2" fill="#f0f0f0"/>
<circle cx="1204.4" cy="125.6" r="3.6" fill="#7a7f8a" stroke="#c3c7ce" stroke-width="1"/><path d="M1204.4,122V125.6" stroke="#c3c7ce" stroke-width=".9"/>
<g transform="translate(1199.6,122.5) scale(1.0)"><path d="M0,0L1,-3.2L6.6,-8.8L9,-6.4L3.4,-0.8Z" fill="#f5c461"/><path d="M6.6,-8.8L8,-10.2A1.2,1.2 0 0 1 9.7,-10.2L10.4,-9.5A1.2,1.2 0 0 1 10.4,-7.8L9,-6.4Z" fill="#e8505c"/><path d="M0,0L.5,-1.6L1.7,-.4Z" fill="#333"/></g>
<path d="M1190.3,146.2L1194,142.3H1201L1209.5,151.6L1200.5,161.2L1190.3,151Z" fill="#d2d2d2"/><circle cx="1193.6" cy="146.4" r="1.2" fill="#3b4453"/><path d="M1196,150L1202,155M1194.5,152.5L1199.5,157.5" stroke="#777" stroke-width=".9"/>
<g transform="translate(1199.5,152.5) scale(1.0)"><path d="M0,0L1,-3.2L6.6,-8.8L9,-6.4L3.4,-0.8Z" fill="#f5c461"/><path d="M6.6,-8.8L8,-10.2A1.2,1.2 0 0 1 9.7,-10.2L10.4,-9.5A1.2,1.2 0 0 1 10.4,-7.8L9,-6.4Z" fill="#e8505c"/><path d="M0,0L.5,-1.6L1.7,-.4Z" fill="#333"/></g>
<polygon points="1219.7,151.2 1226.7,151.2 1223.2,155.2" fill="#e4e6ea"/>
<rect x="1255.4" y="80.2" width="25.4" height="34.8" rx="1" fill="#dedede"/><rect x="1258.6" y="82.9" width="17" height="12" fill="#7cc4f4" stroke="#9aa" stroke-width=".6"/>
<path d="M1259.5,101.7H1275M1259.5,108.2H1275" stroke="#8a8a8a" stroke-width="1"/><rect x="1262.2" y="99.8" width="1.6" height="3.8" fill="#555"/><rect x="1270.8" y="106.2" width="1.6" height="3.8" fill="#555"/>
<path d="M1274,108.3L1284.5,101.6L1291.8,112.8L1283.5,120Z" fill="#f5c461"/><path d="M1282.8,102.3L1287.3,99.5L1289.2,101L1291.8,99.3L1294.3,103L1291.7,104.8L1292.3,107.3L1289,109.4Z" fill="#f4f4f4"/>
<path d="M1323.9,91.9L1319.63,82.75A10.1,10.1 0 0 1 1328.55,82.94Z" fill="#f7b731"/>
<path d="M1323.9,91.9L1328.40,82.86A10.1,10.1 0 0 1 1333.81,89.95Z" fill="#f5852a"/>
<path d="M1323.9,91.9L1333.77,89.78A10.1,10.1 0 0 1 1331.60,98.43Z" fill="#ec4a4a"/>
<path d="M1323.9,91.9L1331.72,98.30A10.1,10.1 0 0 1 1323.60,102.00Z" fill="#b04fd8"/>
<path d="M1323.9,91.9L1323.77,102.00A10.1,10.1 0 0 1 1315.82,97.96Z" fill="#4a78f0"/>
<path d="M1323.9,91.9L1315.93,98.10A10.1,10.1 0 0 1 1314.12,89.36Z" fill="#2fbfd0"/>
<path d="M1323.9,91.9L1314.08,89.53A10.1,10.1 0 0 1 1319.79,82.67Z" fill="#4fd070"/>
<rect x="1314" y="112" width="19.6" height="3.8" fill="#dcdcdc"/><rect x="1314" y="118.7" width="19.6" height="5.4" fill="#dcdcdc"/><rect x="1314" y="126.9" width="19.6" height="4.8" fill="#dcdcdc"/>
<g stroke="#b4b8be" stroke-width="1.1"><path d="M1314,144.5H1333" stroke-dasharray="2.2 1.6"/><path d="M1314,148.3H1333"/><path d="M1314,151.6H1333" stroke-dasharray="4 1.5"/><path d="M1314,155H1333"/><path d="M1314,158.3H1333" stroke-dasharray="2.2 1.6"/></g>
<rect x="1345.5" y="82.5" width="19" height="19.3" fill="#00ffff" stroke="#e8e8e8" stroke-width="1"/>
<path d="M1346,121.5H1425.6M1346,152.5H1425.6" stroke="#e8eaee" stroke-width="1.4"/>
<polygon points="1495.6,90 1505.4,90 1500.5,94.8" fill="#e4e6ea"/>
<polygon points="1495.6,120.3 1505.4,120.3 1500.5,125.1" fill="#e4e6ea"/>
<polygon points="1495.6,150.5 1505.4,150.5 1500.5,155.3" fill="#e4e6ea"/>
<path d="M1498.5,180.2L1503.5,185.2M1504.1,181.79999999999998V185.79999999999998H1500.1" fill="none" stroke="#d8dade" stroke-width="1.1"/>
<path d="M1895.8,180.2L1900.8,185.2M1901.3999999999999,181.79999999999998V185.79999999999998H1897.3999999999999" fill="none" stroke="#d8dade" stroke-width="1.1"/>
<path d="M1523.8,85.6H1519.3V118.6H1523.8M1541.8,85.6H1546.3V118.6H1541.8" fill="none" stroke="#d8d8d8" stroke-width="1.3"/>
<rect x="1526" y="90.5" width="12.6" height="8.6" fill="#3f6f9f" stroke="#6ab7f0" stroke-width="1"/><circle cx="1532.5" cy="109.3" r="6.6" fill="#7a7e88" stroke="#c8c8c8" stroke-width="1"/>
<polygon points="1548.2,79.7 1548.8,85.5 1553.7,82.4 1550.9,87.4 1556.6,87.9 1551.4,90.2 1555.8,94.0 1550.1,92.8 1551.5,98.4 1547.6,94.1 1545.4,99.5 1544.8,93.7 1539.9,96.8 1542.7,91.8 1537.0,91.3 1542.2,89.0 1537.8,85.2 1543.5,86.4 1542.1,80.8 1546.0,85.1" fill="#f5c461"/>
<rect x="1569.3" y="83" width="7.8" height="6" fill="#3f6f9f" stroke="#6ab7f0" stroke-width="1"/><circle cx="1573.2" cy="93.5" r="3.7" fill="#7a7e88" stroke="#c8c8c8" stroke-width="1"/>
<path d="M1579.3,80.6H1582.6V99.4H1579.3" fill="none" stroke="#d8d8d8" stroke-width="1.1"/><path d="M1580.5,88.5L1586,94.5M1586,88.5L1580.5,94.5" stroke="#f0405c" stroke-width="1.7"/>
<path d="M1570.2,111.5H1567.6V128H1570.2M1576.6,111.5H1579.2V128H1576.6" fill="none" stroke="#d8d8d8" stroke-width="1.1"/>
<rect x="1570.8" y="113.8" width="4.8" height="4.2" fill="#3f6f9f" stroke="#6ab7f0" stroke-width="1"/><circle cx="1573.2" cy="123.2" r="2.7" fill="#7a7e88" stroke="#c8c8c8" stroke-width="1"/>
<g transform="translate(1577,130.8) scale(1.0)"><path d="M0,0L1,-3.2L6.6,-8.8L9,-6.4L3.4,-0.8Z" fill="#f5c461"/><path d="M6.6,-8.8L8,-10.2A1.2,1.2 0 0 1 9.7,-10.2L10.4,-9.5A1.2,1.2 0 0 1 10.4,-7.8L9,-6.4Z" fill="#e8505c"/><path d="M0,0L.5,-1.6L1.7,-.4Z" fill="#333"/></g>
<rect x="1563.6" y="139.4" width="27.8" height="26" fill="#36516f" stroke="#5fb4f0" stroke-width="1.3"/>
<path d="M1571.2,142.6H1568.4V159.4H1571.2M1577.8,142.6H1580.6V150" fill="none" stroke="#d8d8d8" stroke-width="1.1"/>
<rect x="1572" y="144.6" width="5" height="4.6" fill="#2e8a4c" stroke="#5fcf7a" stroke-width="1"/><circle cx="1574.5" cy="154.3" r="2.7" fill="#2e8a4c" stroke="#5fcf7a" stroke-width="1"/>
<path transform="translate(1579,150.8) scale(0.95)" d="M0,0V10.5L2.6,8.2L4.6,12.4L6.4,11.5L4.4,7.5H7.8Z" fill="#f6f6f6" stroke="#3b4453" stroke-width=".5"/>
<rect x="1623" y="94.8" width="35.2" height="8.1" rx=".8" fill="#f5c461"/>
<rect x="1626.07" y="94.8" width=".9" height="2.8" fill="#9a7420"/>
<rect x="1629.59" y="94.8" width=".9" height="4" fill="#9a7420"/>
<rect x="1633.11" y="94.8" width=".9" height="2.8" fill="#9a7420"/>
<rect x="1636.63" y="94.8" width=".9" height="4" fill="#9a7420"/>
<rect x="1640.15" y="94.8" width=".9" height="2.8" fill="#9a7420"/>
<rect x="1643.67" y="94.8" width=".9" height="4" fill="#9a7420"/>
<rect x="1647.19" y="94.8" width=".9" height="2.8" fill="#9a7420"/>
<rect x="1650.71" y="94.8" width=".9" height="4" fill="#9a7420"/>
<rect x="1654.23" y="94.8" width=".9" height="2.8" fill="#9a7420"/>
<rect x="1696" y="88" width="12.6" height="11.6" fill="#eef2f8"/><path d="M1698.3,91.3H1699.5M1701,91.3H1706.5M1698.3,94H1699.5M1701,94H1706.5M1698.3,96.7H1699.5M1701,96.7H1706.5" stroke="#3a7fc8" stroke-width="1.1"/>
<path d="M1694.5,80.2L1690.8,85.3H1693.6L1692,89.6L1697,84H1694Z" fill="#f5c461"/>
<path transform="translate(1687.8,86.8) scale(0.95)" d="M0,0V10.5L2.6,8.2L4.6,12.4L6.4,11.5L4.4,7.5H7.8Z" fill="#f6f6f6" stroke="#3b4453" stroke-width=".5"/>
<rect x="1688.6" y="111.7" width="17" height="16.6" fill="#2f7d54" stroke="#5fcf8a" stroke-width="1" stroke-dasharray="1.8 1.4"/><path d="M1694,113.8H1703.6V122.6H1699.6V125.8H1690.8V117H1694Z" fill="#62d191"/>
<path transform="translate(1699.5,120.6) scale(0.95)" d="M0,0V10.5L2.6,8.2L4.6,12.4L6.4,11.5L4.4,7.5H7.8Z" fill="#f6f6f6" stroke="#3b4453" stroke-width=".5"/>
<rect x="1690.5" y="142.2" width="14.4" height="19.4" rx=".8" fill="#c6c6c6"/><rect x="1692.6" y="144.3" width="10.2" height="3.6" fill="#7a7a7a"/>
<rect x="1692.6" y="150.0" width="2.7" height="2.6" fill="#6e6e6e"/>
<rect x="1696.2" y="150.0" width="2.7" height="2.6" fill="#6e6e6e"/>
<rect x="1699.8" y="150.0" width="2.7" height="2.6" fill="#6e6e6e"/>
<rect x="1692.6" y="153.6" width="2.7" height="2.6" fill="#6e6e6e"/>
<rect x="1696.2" y="153.6" width="2.7" height="2.6" fill="#6e6e6e"/>
<rect x="1699.8" y="153.6" width="2.7" height="2.6" fill="#6e6e6e"/>
<rect x="1692.6" y="157.2" width="2.7" height="2.6" fill="#6e6e6e"/>
<rect x="1696.2" y="157.2" width="2.7" height="2.6" fill="#6e6e6e"/>
<rect x="1699.8" y="157.2" width="2.7" height="2.6" fill="#6e6e6e"/>
<rect x="1735" y="84" width="28" height="31" fill="#e6b36c"/><path d="M1742,85.2V82.5H1745.5A3.2,3.2 0 0 1 1751.5,82.5H1755V85.2Z" fill="#f4f4f4"/>
<path d="M1744,92.4H1759.5L1766.8,99.8V120H1744Z" fill="#dcdcdc"/><path d="M1759.5,92.4V99.8H1766.8Z" fill="#f6f6f6"/>
<rect x="1787" y="81.3" width="15" height="16.6" fill="#d0d0d0"/><path d="M1789.5,85H1799.5M1789.5,88.3H1796M1789.5,91.6H1795M1789.5,94.9H1796.5" stroke="#8a8a8a" stroke-width="1"/>
<path d="M1796,87.5L1804.5,97M1806.5,88L1798.5,97" stroke="#f6f6f6" stroke-width="1.7"/><circle cx="1798" cy="98.5" r="1.9" fill="none" stroke="#f6f6f6" stroke-width="1.2"/><circle cx="1804.6" cy="98.5" r="1.9" fill="none" stroke="#f6f6f6" stroke-width="1.2"/>
<path d="M1789.2,112.2H1797.5L1800,114.7V128.3H1789.2Z" fill="#c4c4c4"/><path d="M1793.2,115.6H1801.5L1805,119V131.8H1793.2Z" fill="#dcdcdc" stroke="#3b4453" stroke-width=".8"/><path d="M1801.5,115.6V119H1805Z" fill="#f6f6f6"/>
<polygon points="1813.5,89.4 1820.5,89.4 1817,93.4" fill="#e4e6ea"/>
<polygon points="1813.5,120.7 1820.5,120.7 1817,124.7" fill="#e4e6ea"/>
<path d="M1848.8,84H1866.2V97H1889V114H1848.8Z" fill="#dcdcdc"/>
<!-- arrows -->
<polygon points="145.8,146.4 152.4,146.4 149.1,150.2" fill="#e4e6ea"/>
<polygon points="202.8,146.4 209.4,146.4 206.1,150.2" fill="#e4e6ea"/>
<polygon points="584.4,146.4 591.0,146.4 587.7,150.2" fill="#e4e6ea"/>
<polygon points="1106.8,146.0 1113.4,146.0 1110.1,149.8" fill="#e4e6ea"/>
<polygon points="1637.6,146.9 1644.2,146.9 1640.9,150.7" fill="#e4e6ea"/>
<polygon points="1747.9,147.7 1754.5,147.7 1751.2,151.5" fill="#e4e6ea"/>
<polygon points="1865.7,147.0 1872.3,147.0 1869.0,150.8" fill="#e4e6ea"/>
<polygon points="265.9,88.5 272.5,88.5 269.2,92.5" fill="#e4e6ea"/>
<polygon points="265.9,119.6 272.5,119.6 269.2,123.6" fill="#e4e6ea"/>
<polygon points="265.9,150.2 272.5,150.2 269.2,154.2" fill="#e4e6ea"/>
<polygon points="501.7,88.5 508.3,88.5 505.0,92.5" fill="#e4e6ea"/>
<polygon points="501.7,119.6 508.3,119.6 505.0,123.6" fill="#e4e6ea"/>
<polygon points="501.7,150.2 508.3,150.2 505.0,154.2" fill="#e4e6ea"/>
<polygon points="727.8,88.5 734.4,88.5 731.1,92.5" fill="#e4e6ea"/>
<polygon points="727.8,119.6 734.4,119.6 731.1,123.6" fill="#e4e6ea"/>
<polygon points="163.2,181.0 172.2,181.0 167.7,186.0" fill="#e4e6ea"/>
<polygon points="443.2,181.0 452.2,181.0 447.7,186.0" fill="#e4e6ea"/>
<polygon points="686.5,181.0 695.5,181.0 691.0,186.0" fill="#e4e6ea"/>
<polygon points="932.2,181.0 941.2,181.0 936.7,186.0" fill="#e4e6ea"/>
<polygon points="1176.5,181.0 1185.5,181.0 1181.0,186.0" fill="#e4e6ea"/>
<polygon points="1398.5,181.0 1407.5,181.0 1403.0,186.0" fill="#e4e6ea"/>
<polygon points="1577.7,181.0 1586.7,181.0 1582.2,186.0" fill="#e4e6ea"/>
<polygon points="1681.5,181.0 1690.5,181.0 1686.0,186.0" fill="#e4e6ea"/>
<polygon points="1877.2,181.0 1886.2,181.0 1881.7,186.0" fill="#e4e6ea"/>
<!-- tabs -->
<rect x="26" y="205.5" width="20" height="2.2" fill="#e6e6e6"/><rect x="26" y="211.9" width="20" height="2.2" fill="#e6e6e6"/><rect x="26" y="218.4" width="20" height="2.2" fill="#e6e6e6"/>
<path d="M59.4,222.7L67.6,203.2M312.7,222.7L320.4,203.2" stroke="#414958" stroke-width="1.3"/>
<path d="M245.4,209.4L254.8,218M254.8,209.4L245.4,218" stroke="#aab0bc" stroke-width="2.1"/>
<path d="M282.2,213.2H299.8M291,204.6V221.8" stroke="#f0f0f0" stroke-width="2.4"/>
<rect x="26" y="985.6" width="20" height="2.2" fill="#e6e6e6"/><rect x="26" y="992.0" width="20" height="2.2" fill="#e6e6e6"/><rect x="26" y="998.5" width="20" height="2.2" fill="#e6e6e6"/>
<path d="M181.2,1005L189,984M233,1005L240.6,984" stroke="#414958" stroke-width="1.3"/>
<path d="M203.3,993H220.9M212.1,984.4V1001.6" stroke="#f0f0f0" stroke-width="2.4"/>
<rect x="1839.8" y="251" width="13.3" height="2.9" fill="#f0f0f0"/>
<path d="M1866.1,247.4H1873.9V255H1866.1Z" fill="none" stroke="#f2f2f2" stroke-width="2.3"/><path d="M1868.2,243.6H1877.5V253.2" fill="none" stroke="#f2f2f2" stroke-width="1.2"/>
<path d="M1891.3,244.8L1900.6,253.2M1900.6,244.8L1891.3,253.2" stroke="#f6f6f6" stroke-width="3"/>
<!-- status -->
<path d="M1233.7,991.4000000000001H1252.7M1233.7,995.7H1252.7M1233.7,1000.0H1252.7M1238.9,986.2V1005.2M1243.2,986.2V1005.2M1247.5,986.2V1005.2" stroke="#ececec" stroke-width="1.1" fill="none"/>
<rect x="1265.4" y="988.4" width="3" height="2.7" fill="#ececec"/>
<rect x="1265.4" y="994.4" width="3" height="2.7" fill="#ececec"/>
<rect x="1265.4" y="1000.4" width="3" height="2.7" fill="#ececec"/>
<rect x="1271.8" y="988.4" width="3" height="2.7" fill="#ececec"/>
<rect x="1271.8" y="994.4" width="3" height="2.7" fill="#ececec"/>
<rect x="1271.8" y="1000.4" width="3" height="2.7" fill="#ececec"/>
<rect x="1278.2" y="988.4" width="3" height="2.7" fill="#ececec"/>
<rect x="1278.2" y="994.4" width="3" height="2.7" fill="#ececec"/>
<rect x="1278.2" y="1000.4" width="3" height="2.7" fill="#ececec"/>
<polygon points="1294.0,993.1 1303.5,993.1 1298.8,998.1" fill="#ececec"/>
<polygon points="1408.2,993.1 1417.8,993.1 1413.0,998.1" fill="#ececec"/>
<polygon points="1458.2,993.1 1467.8,993.1 1463.0,998.1" fill="#ececec"/>
<polygon points="1539.2,993.1 1548.8,993.1 1544.0,998.1" fill="#ececec"/>
<polygon points="1674.0,993.1 1683.5,993.1 1678.8,998.1" fill="#ececec"/>
<polygon points="1727.0,993.1 1736.5,993.1 1731.7,998.1" fill="#ececec"/>
<path d="M1317,989.8H1327M1322,984.8V994.8" stroke="#ececec" stroke-width="1.2"/><rect x="1325" y="998" width="12.4" height="5.4" fill="none" stroke="#ececec" stroke-width="1"/><rect x="1329.5" y="998.5" width="8" height="4.4" fill="#ececec"/>
<path d="M1348.5,986V1005H1368M1348.5,999.5H1354.5V1005" fill="none" stroke="#ececec" stroke-width="1.2"/>
<circle cx="1385.6" cy="996" r="8" fill="none" stroke="#ececec" stroke-width="1.2"/><path d="M1385.6,996L1394.5,986.6M1385.6,996H1397.8" stroke="#ececec" stroke-width="1.2"/>
<path d="M1430.5,984.8L1445,1004" stroke="#c8506a" stroke-width=".9"/><path d="M1438,983V1008" stroke="#4fbf7a" stroke-width=".9"/><rect x="1436.5" y="994.4" width="3" height="3" fill="#3b4453" stroke="#ececec" stroke-width=".9"/>
<path d="M1479.5,1003.8H1498M1481,1003.5L1494.5,988" stroke="#ececec" stroke-width="1.2"/><rect x="1485" y="994.4" width="3.4" height="3.4" fill="#ececec"/>
<rect x="1512.8" y="989.6" width="15.8" height="15.4" fill="none" stroke="#ececec" stroke-width="1.3"/><rect x="1509.8" y="986.6" width="4.8" height="4.8" fill="#5b8fd2" stroke="#ececec" stroke-width="1.1"/>
<path d="M1570.5,986L1573.4,994L1573.8,995.6L1579.4,1006.3L1572.1,1002L1570.5,1001.2L1568.9,1002L1561.6,1006.3L1567.2,995.6L1567.6,994Z" fill="#f6f6f6"/>
<circle cx="1578.2" cy="990.4" r="3.2" fill="none" stroke="#f4f4f4" stroke-width="1.2"/>
<path d="M1600.3,986L1603.2,994L1603.6,995.6L1609.2,1006.3L1601.8999999999999,1002L1600.3,1001.2L1598.7,1002L1591.3999999999999,1006.3L1597.0,995.6L1597.3999999999999,994Z" fill="#dedede"/>
<path d="M1609.6,986.8L1605.4,991.2H1608L1606,995.4L1610.8,990H1608.3L1610.6,986.8Z" fill="#dedede"/>
<path d="M1631.5,986L1634.4,994L1634.8,995.6L1640.4,1006.3L1633.1,1002L1631.5,1001.2L1629.9,1002L1622.6,1006.3L1628.2,995.6L1628.6,994Z" fill="#dedede"/>
<polygon points="1706.06,986.15 1707.94,986.15 1709.03,989.00 1710.30,989.53 1713.09,988.28 1714.42,989.61 1713.17,992.40 1713.70,993.67 1716.55,994.76 1716.55,996.64 1713.70,997.73 1713.17,999.00 1714.42,1001.79 1713.09,1003.12 1710.30,1001.87 1709.03,1002.40 1707.94,1005.25 1706.06,1005.25 1704.97,1002.40 1703.70,1001.87 1700.91,1003.12 1699.58,1001.79 1700.83,999.00 1700.30,997.73 1697.45,996.64 1697.45,994.76 1700.30,993.67 1700.83,992.40 1699.58,989.61 1700.91,988.28 1703.70,989.53 1704.97,989.00" fill="#e2e2e2"/><circle cx="1707" cy="995.7" r="3.6" fill="#3b4453"/>
<path d="M1748.2,995.6H1766.8M1757.5,986.4V1004.8" stroke="#ececec" stroke-width="2.3"/>
<rect x="1781.6" y="986.8" width="7" height="7" fill="none" stroke="#ececec" stroke-width="1"/><circle cx="1796.7" cy="994.5" r="4" fill="none" stroke="#ececec" stroke-width="1"/><path d="M1788.8,997.5L1793.3,1005H1784.3Z" fill="none" stroke="#ececec" stroke-width="1"/>
<path d="M1818.3,986.6H1829L1834,991.6V1004.4H1818.3Z" fill="#3f7fd0"/><path d="M1829,986.6V991.6H1834Z" fill="#a8c8f0"/><path d="M1818.3,998H1826C1830,998 1833,1000.5 1834,1004.4H1818.3Z" fill="#f2b83a"/>
<path d="M1818.3,991.5H1828M1822.2,987V1000" stroke="#e8f0fa" stroke-width=".9"/><circle cx="1822.2" cy="991.5" r="1.8" fill="#3f7fd0" stroke="#e8f0fa" stroke-width=".9"/><path d="M1828.5,1002.2L1831,1004.8L1836,999.6" fill="none" stroke="#4fcf6a" stroke-width="1.7"/>
<rect x="1855.3" y="988.2" width="19" height="14.6" fill="none" stroke="#ececec" stroke-width="1.1"/><path d="M1858,1000L1862.5,996.2M1872,991L1867.5,994.8" stroke="#ececec" stroke-width="1.1"/><path d="M1857.6,1000.5V996.7L1861.4,1000.5ZM1872.4,990.5V994.3L1868.6,990.5Z" fill="#ececec"/>
<rect x="1887" y="987.2" width="20.6" height="2.2" fill="#f0f0f0"/>
<rect x="1887" y="994.6" width="20.6" height="2.2" fill="#f0f0f0"/>
<rect x="1887" y="1002" width="20.6" height="2.2" fill="#f0f0f0"/>
</svg>

<span class="t" id="t0" style="left:423.0px;top:12.1px;font-size:15px;color:#6cb6ea;transform:scaleX(0.8993);">Share</span>
<span class="t" id="t1" style="left:645.0px;top:12.1px;font-size:15px;color:#e8eaee;transform:scaleX(0.9840);">Autodesk AutoCAD 2025</span>
<span class="t" id="t2" style="left:825.0px;top:12.1px;font-size:15px;color:#e8eaee;transform:scaleX(0.9690);">rd_2425.dwt</span>
<span class="t" id="t3" style="left:1103.2px;top:12.0px;font-size:14.2px;color:#a4aab6;font-style:italic;transform:scaleX(0.9259);">Type a keyword or phrase</span>
<span class="t" id="t4" style="left:1385.5px;top:12.2px;font-size:16px;color:#e8eaee;transform:scaleX(0.9477);">ana-leonor</span>
<span class="t" id="t5" style="left:21.3px;top:48.6px;font-size:15.5px;color:#ffffff;transform:scaleX(0.9768);">Home</span>
<span class="t" id="t6" style="left:86.0px;top:48.6px;font-size:15.5px;color:#c4c9d2;transform:scaleX(0.9209);">Insert</span>
<span class="t" id="t7" style="left:146.0px;top:48.6px;font-size:15.5px;color:#c4c9d2;transform:scaleX(0.9780);">Annotate</span>
<span class="t" id="t8" style="left:231.0px;top:48.6px;font-size:15.5px;color:#c4c9d2;transform:scaleX(0.9341);">Parametric</span>
<span class="t" id="t9" style="left:325.0px;top:48.6px;font-size:15.5px;color:#c4c9d2;transform:scaleX(0.9511);">View</span>
<span class="t" id="t10" style="left:381.0px;top:48.6px;font-size:15.5px;color:#c4c9d2;transform:scaleX(0.9640);">Manage</span>
<span class="t" id="t11" style="left:459.0px;top:48.6px;font-size:15.5px;color:#c4c9d2;transform:scaleX(0.9735);">Output</span>
<span class="t" id="t12" style="left:529.0px;top:48.6px;font-size:15.5px;color:#c4c9d2;transform:scaleX(0.9836);">Add-ins</span>
<span class="t" id="t13" style="left:605.0px;top:48.6px;font-size:15.5px;color:#c4c9d2;transform:scaleX(0.9801);">Collaborate</span>
<span class="t" id="t14" style="left:707.3px;top:48.6px;font-size:15.5px;color:#c4c9d2;transform:scaleX(0.9116);">Express Tools</span>
<span class="t" id="t15" style="left:819.3px;top:48.6px;font-size:15.5px;color:#c4c9d2;transform:scaleX(0.9491);">Featured Apps</span>
<span class="t" id="t16" style="left:21.0px;top:124.0px;font-size:15.3px;color:#e4e6ea;transform:scaleX(0.9232);">Line</span>
<span class="t" id="t17" style="left:61.0px;top:124.0px;font-size:15.3px;color:#e4e6ea;transform:scaleX(0.9463);">Polyline</span>
<span class="t" id="t18" style="left:130.0px;top:124.0px;font-size:15.3px;color:#e4e6ea;transform:scaleX(0.9209);">Circle</span>
<span class="t" id="t19" style="left:195.7px;top:124.0px;font-size:15.3px;color:#e4e6ea;transform:scaleX(0.9149);">Arc</span>
<span class="t" id="t20" style="left:120.7px;top:174.0px;font-size:15.3px;color:#e4e6ea;transform:scaleX(0.9607);">Draw</span>
<span class="t" id="t21" style="left:320.0px;top:80.7px;font-size:15.3px;color:#e4e6ea;transform:scaleX(0.9811);">Move</span>
<span class="t" id="t22" style="left:320.0px;top:111.7px;font-size:15.3px;color:#e4e6ea;transform:scaleX(0.9323);">Copy</span>
<span class="t" id="t23" style="left:320.0px;top:143.0px;font-size:15.3px;color:#e4e6ea;transform:scaleX(0.9429);">Stretch</span>
<span class="t" id="t24" style="left:411.0px;top:80.7px;font-size:15.3px;color:#e4e6ea;transform:scaleX(0.9606);">Rotate</span>
<span class="t" id="t25" style="left:411.0px;top:111.7px;font-size:15.3px;color:#e4e6ea;transform:scaleX(1.0191);">Mirror</span>
<span class="t" id="t26" style="left:411.0px;top:143.0px;font-size:15.3px;color:#e4e6ea;transform:scaleX(0.9068);">Scale</span>
<span class="t" id="t27" style="left:388.3px;top:174.0px;font-size:15.3px;color:#e4e6ea;transform:scaleX(1.0208);">Modify</span>
<span class="t" id="t28" style="left:574.3px;top:124.0px;font-size:15.3px;color:#e4e6ea;transform:scaleX(0.9408);">Text</span>
<span class="t" id="t29" style="left:618.3px;top:124.0px;font-size:15.3px;color:#e4e6ea;transform:scaleX(0.9783);">Dimension</span>
<span class="t" id="t30" style="left:604.3px;top:174.0px;font-size:15.3px;color:#e4e6ea;transform:scaleX(1.0033);">Annotation</span>
<span class="t" id="t31" style="left:764.0px;top:124.0px;font-size:15.3px;color:#e4e6ea;transform:scaleX(0.9147);">Layer</span>
<span class="t" id="t32" style="left:748.3px;top:144.0px;font-size:15.3px;color:#e4e6ea;transform:scaleX(0.9567);">Properties</span>
<span class="t" id="t33" style="left:923.3px;top:81.7px;font-size:15.3px;color:#e4e6ea;transform:scaleX(0.9803);">Dodecaedro</span>
<span class="t" id="t34" style="left:883.3px;top:174.0px;font-size:15.3px;color:#e4e6ea;transform:scaleX(0.8710);">Layers</span>
<span class="t" id="t35" style="left:1092.4px;top:122.9px;font-size:15.3px;color:#e4e6ea;transform:scaleX(0.9303);">Insert</span>
<span class="t" id="t36" style="left:1137.5px;top:124.0px;font-size:15.3px;color:#e4e6ea;transform:scaleX(0.9837);">Detect</span>
<span class="t" id="t37" style="left:1132.5px;top:174.0px;font-size:15.3px;color:#e4e6ea;transform:scaleX(0.9544);">Block</span>
<span class="t" id="t38" style="left:1253.7px;top:124.7px;font-size:15.3px;color:#e4e6ea;transform:scaleX(0.9626);">Match</span>
<span class="t" id="t39" style="left:1240.7px;top:144.3px;font-size:15.3px;color:#e4e6ea;transform:scaleX(0.9481);">Properties</span>
<span class="t" id="t40" style="left:1370.6px;top:82.2px;font-size:15.3px;color:#e4e6ea;transform:scaleX(0.8980);">ByLayer</span>
<span class="t" id="t41" style="left:1428.4px;top:112.4px;font-size:15.3px;color:#e4e6ea;transform:scaleX(0.8927);">ByLayer</span>
<span class="t" id="t42" style="left:1428.4px;top:142.7px;font-size:15.3px;color:#e4e6ea;transform:scaleX(0.8927);">ByLayer</span>
<span class="t" id="t43" style="left:1323.3px;top:174.0px;font-size:15.3px;color:#e4e6ea;transform:scaleX(0.9567);">Properties</span>
<span class="t" id="t44" style="left:1517.3px;top:123.6px;font-size:15.3px;color:#e4e6ea;transform:scaleX(0.9479);">Group</span>
<span class="t" id="t45" style="left:1522.2px;top:174.0px;font-size:15.3px;color:#e4e6ea;transform:scaleX(0.9268);">Groups</span>
<span class="t" id="t46" style="left:1613.6px;top:123.6px;font-size:15.3px;color:#e4e6ea;transform:scaleX(0.9258);">Measure</span>
<span class="t" id="t47" style="left:1623.5px;top:174.0px;font-size:15.3px;color:#e4e6ea;transform:scaleX(0.9980);">Utilities</span>
<span class="t" id="t48" style="left:1734.0px;top:124.7px;font-size:15.3px;color:#e4e6ea;transform:scaleX(0.8588);">Paste</span>
<span class="t" id="t49" style="left:1741.2px;top:174.0px;font-size:15.3px;color:#e4e6ea;transform:scaleX(0.9987);">Clipboard</span>
<span class="t" id="t50" style="left:1854.5px;top:124.7px;font-size:15.3px;color:#e4e6ea;transform:scaleX(0.8688);">Base</span>
<span class="t" id="t51" style="left:1837.3px;top:174.0px;font-size:15.3px;color:#e4e6ea;transform:scaleX(0.9547);">View</span>
<span class="t" id="t52" style="left:78.3px;top:204.1px;font-size:15px;color:#e0e3e8;transform:scaleX(0.9688);">Start</span>
<span class="t" id="t53" style="left:139.3px;top:204.1px;font-size:15px;color:#ffffff;font-weight:700;transform:scaleX(1.0157);">rd_2425.dwt*</span>
<span class="t" id="t54" style="left:10.4px;top:237.4px;font-size:15.5px;color:#d4d7dc;transform:scaleX(1.1317);">[−]</span>
<span class="t" id="t55" style="left:33.1px;top:237.4px;font-size:15.5px;color:#d4d7dc;transform:scaleX(0.9263);">[Custom View]</span>
<span class="t" id="t56" style="left:128.0px;top:237.4px;font-size:15.5px;color:#d4d7dc;transform:scaleX(0.8803);">[X-Ray]</span>
<span class="t" id="t57" style="left:78.3px;top:983.5px;font-size:15.2px;color:#ffffff;font-weight:700;transform:scaleX(0.9892);">Model</span>
<span class="t" id="t58" style="left:152.3px;top:983.5px;font-size:15.2px;color:#e0e3e8;transform:scaleX(0.9527);">A3</span>
<span class="t" id="t59" style="left:1171.9px;top:986.4px;font-size:15.2px;color:#f0f0f0;transform:scaleX(0.9164);">MODEL</span>
<span class="t" id="t60" style="left:1653.5px;top:986.4px;font-size:15.2px;color:#f0f0f0;transform:scaleX(0.7195);">1:1</span>
<span class="t mono" id="t61" style="left:238.3px;top:917.1px;font-size:14.5px;color:#d0d0d0;transform:scaleX(0.9982);">Command:</span>
<span class="t mono" id="t62" style="left:275.0px;top:947.8px;font-size:14.5px;color:#6e6e6e;font-style:italic;transform:scaleX(1.0178);">Type a command</span>
</div></body></html>
